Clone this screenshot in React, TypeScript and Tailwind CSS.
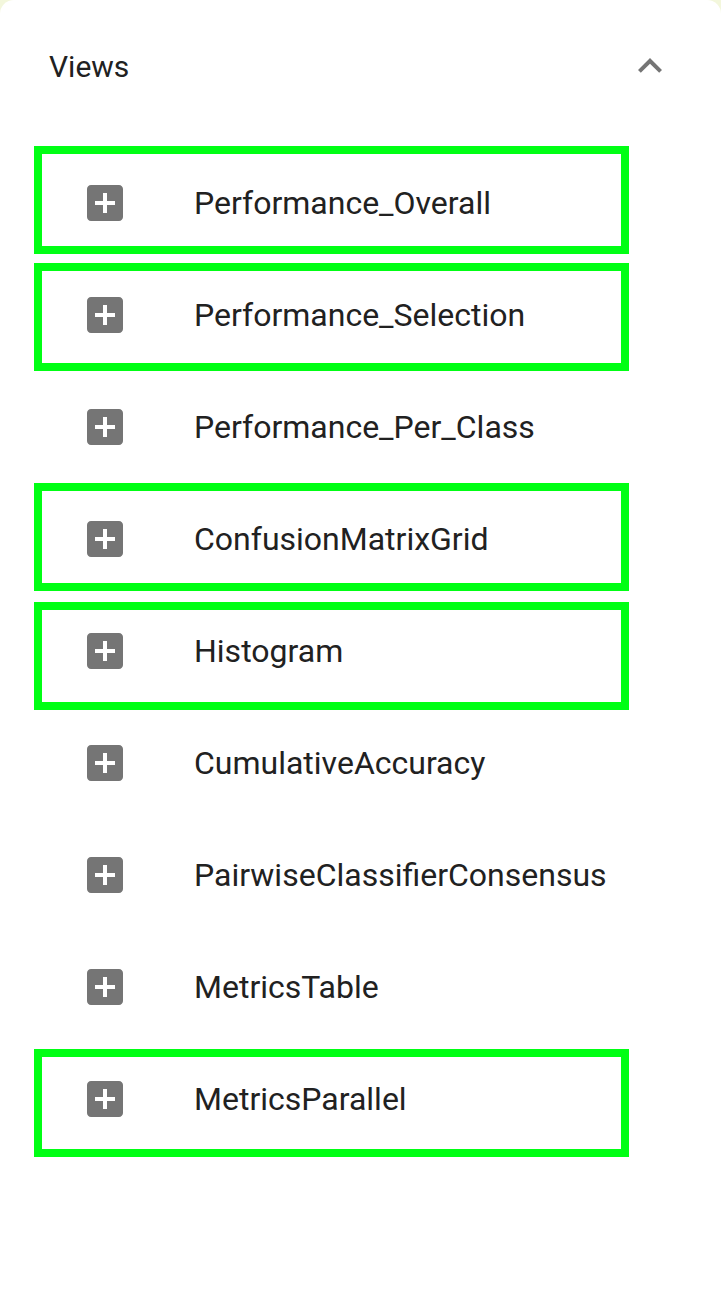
import React from "react";

type Row = { name: string; box?: number };

const rows: Row[] = [
  { name: "Performance_Overall", box: -1 },
  { name: "Performance_Selection", box: 4 },
  { name: "Performance_Per_Class" },
  { name: "ConfusionMatrixGrid", box: 0 },
  { name: "Histogram", box: 7 },
  { name: "CumulativeAccuracy" },
  { name: "PairwiseClassifierConsensus" },
  { name: "MetricsTable" },
  { name: "MetricsParallel", box: 6 },
];

function AddBox() {
  return (
    <svg width="48" height="48" viewBox="0 0 24 24" className="shrink-0">
      <path
        fill="#757575"
        d="M19 3H5c-1.11 0-2 .9-2 2v14c0 1.1.89 2 2 2h14c1.1 0 2-.9 2-2V5c0-1.1-.9-2-2-2zm-2 10h-4v4h-2v-4H7v-2h4V7h2v4h4v2z"
      />
    </svg>
  );
}

export default function App() {
  return (
    <div className="bg-[#f3f7dc] w-[721px] h-[1312px]" style={{ fontFamily: "Roboto, 'Noto Sans', sans-serif" }}>
      <div className="bg-white rounded-t-[14px] h-full">
        <div className="h-[132px] flex items-center justify-between pl-[49px] pr-[47px]">
          <span className="text-[30px] text-[#212121]">Views</span>
          <svg width="48" height="48" viewBox="0 0 24 24">
            <path fill="#757575" d="M12 8l-6 6 1.41 1.41L12 10.83l4.59 4.58L18 14z" />
          </svg>
        </div>
        <div className="pt-[15px] flex flex-col">
          {rows.map((r) => (
            <div key={r.name} className="relative h-[112px] flex items-center pl-[81px]">
              <AddBox />
              <span className="ml-[65px] text-[32px] text-[#212121] leading-none">{r.name}</span>
              {r.box !== undefined && (
                <div
                  className="absolute left-[34px] w-[595px] h-[108px] border-[8px] border-[#00ff14] pointer-events-none"
                  style={{ top: r.box }}
                />
              )}
            </div>
          ))}
        </div>
      </div>
    </div>
  );
}
